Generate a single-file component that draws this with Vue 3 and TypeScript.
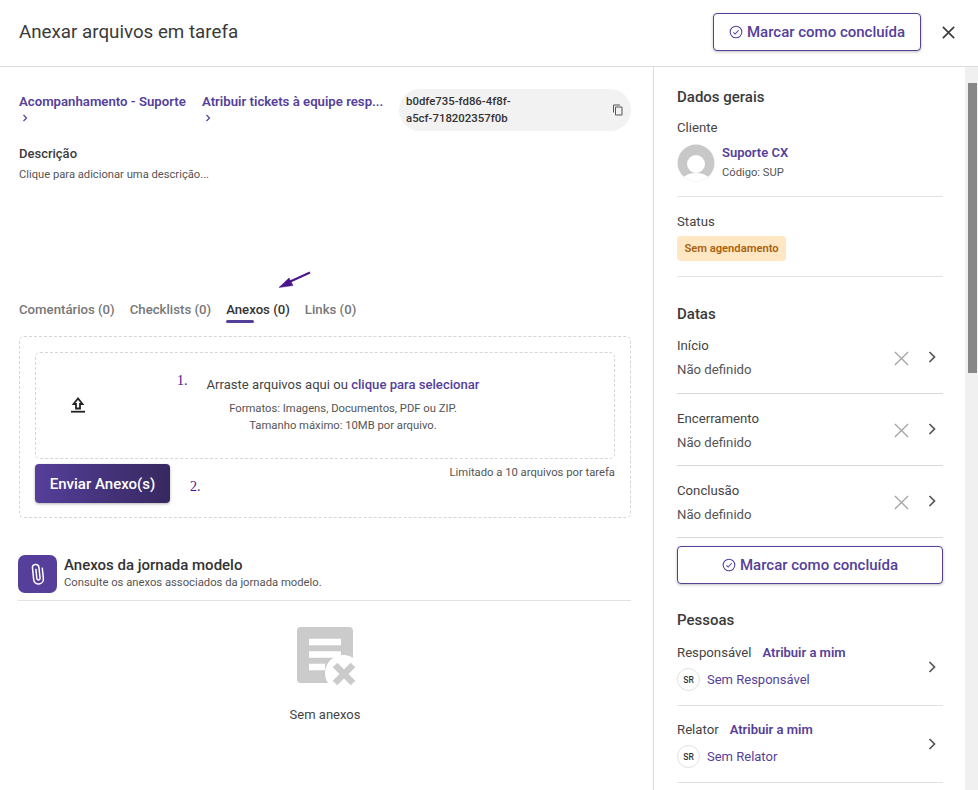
<template>
  <div class="page">
    <header class="top">
      <h1>Anexar arquivos em tarefa</h1>
      <div class="top-actions">
        <button class="outline top-btn">
          <svg class="check" viewBox="0 0 24 24"><circle cx="12" cy="12" r="10" /><path d="M7.5 12.5l3 3 6-6.5" /></svg>
          Marcar como concluída
        </button>
        <svg class="close" viewBox="0 0 16 16"><path d="M2 2l12 12M14 2L2 14" /></svg>
      </div>
    </header>

    <div class="body">
      <main class="left">
        <div class="crumbs">
          <div class="crumb first">
            <a>Acompanhamento - Suporte</a>
            <svg viewBox="0 0 8 8"><path d="M2.5 1l3 3-3 3" /></svg>
          </div>
          <div class="crumb second">
            <a>Atribuir tickets à equipe resp...</a>
            <svg viewBox="0 0 8 8"><path d="M2.5 1l3 3-3 3" /></svg>
          </div>
          <div class="uuid">
            <span>b0dfe735-fd86-4f8f-a5cf-718202357f0b</span>
            <svg viewBox="0 0 24 24"><path d="M16 1H4a2 2 0 0 0-2 2v14h2V3h12V1zm3 4H8a2 2 0 0 0-2 2v14a2 2 0 0 0 2 2h11a2 2 0 0 0 2-2V7a2 2 0 0 0-2-2zm0 16H8V7h11v14z" /></svg>
          </div>
        </div>

        <h3 class="desc-title">Descrição</h3>
        <p class="desc">Clique para adicionar uma descrição...</p>

        <nav class="tabs">
          <span v-for="t in tabs" :key="t" class="tab" :class="{ active: t === 'Anexos (0)' }">{{ t }}</span>
          <svg class="arrow" viewBox="0 0 34 20"><path d="M32 1.5L9 12" /><path class="head" d="M1 16.5L11 7l4 7.5z" /></svg>
        </nav>

        <section class="upload-box">
          <div class="drop">
            <svg class="up" viewBox="0 0 14 16"><path d="M7 1.5L2.5 7H5V11.5H9V7H11.5z" /><path d="M0 14.7h14" /></svg>
            <div class="drop-text">
              <p class="drag">Arraste arquivos aqui ou <b>clique para selecionar</b></p>
              <p>Formatos: Imagens, Documentos, PDF ou ZIP.</p>
              <p>Tamanho máximo: 10MB por arquivo.</p>
            </div>
            <span class="mark one">1.</span>
          </div>
          <div class="upload-foot">
            <button class="send">Enviar Anexo(s)</button>
            <span class="mark two">2.</span>
            <span class="limit">Limitado a 10 arquivos por tarefa</span>
          </div>
        </section>

        <div class="model-head">
          <div class="clip">
            <svg viewBox="0 0 24 24"><path d="M16.5 6.5v10.2a4.5 4.5 0 0 1-9 0V6a3 3 0 0 1 6 0v10a1.5 1.5 0 0 1-3 0V7" /></svg>
          </div>
          <div>
            <h2>Anexos da jornada modelo</h2>
            <p>Consulte os anexos associados da jornada modelo.</p>
          </div>
        </div>

        <div class="empty">
          <svg viewBox="0 0 60 60">
            <rect x="0" y="0" width="56" height="56" rx="4" fill="#cbcbcb" />
            <path d="M12 15h32M12 27.5h32M12 40h16" stroke="#fff" stroke-width="6.5" fill="none" />
            <circle cx="46" cy="46" r="18" fill="#fff" />
            <path d="M38 38l18 18M56 38L38 56" stroke="#cbcbcb" stroke-width="6.5" fill="none" />
          </svg>
          <span>Sem anexos</span>
        </div>
      </main>

      <aside class="side">
        <h4 class="first-head">Dados gerais</h4>
        <div class="field-label client-label">Cliente</div>
        <div class="client">
          <svg class="avatar" viewBox="0 0 38 38">
            <defs><clipPath id="av"><circle cx="19" cy="19" r="18.5" /></clipPath></defs>
            <circle cx="19" cy="19" r="18.5" fill="#c8c8c8" />
            <g clip-path="url(#av)" fill="#fff">
              <circle cx="19" cy="20" r="9" />
              <ellipse cx="19" cy="40" rx="16" ry="11" />
            </g>
          </svg>
          <div>
            <a class="client-name">Suporte CX</a>
            <div class="client-code">Código: SUP</div>
          </div>
        </div>
        <hr class="sep client-sep" />
        <div class="field-label">Status</div>
        <span class="badge">Sem agendamento</span>
        <hr class="sep status-sep" />

        <h4 class="dates-head">Datas</h4>
        <div v-for="d in dates" :key="d" class="date-row">
          <div>
            <div class="field-label">{{ d }}</div>
            <div class="date-value">Não definido</div>
          </div>
          <div class="row-icons">
            <svg class="x" viewBox="0 0 16 16"><path d="M1 1l14 14M15 1L1 15" /></svg>
            <svg class="chev" viewBox="0 0 10 14"><path d="M2.5 2l5 5-5 5" /></svg>
          </div>
        </div>

        <button class="outline side-btn">
          <svg class="check" viewBox="0 0 24 24"><circle cx="12" cy="12" r="10" /><path d="M7.5 12.5l3 3 6-6.5" /></svg>
          Marcar como concluída
        </button>

        <h4 class="people-head">Pessoas</h4>
        <div v-for="p in people" :key="p.role" class="person">
          <div>
            <div class="person-top">
              <span class="field-label">{{ p.role }}</span>
              <a>Atribuir a mim</a>
            </div>
            <div class="person-line">
              <span class="sr">SR</span>
              <a>{{ p.empty }}</a>
            </div>
          </div>
          <svg class="chev" viewBox="0 0 10 14"><path d="M2.5 2l5 5-5 5" /></svg>
        </div>
      </aside>

      <div class="scroll"><div class="thumb"></div></div>
    </div>
  </div>
</template>

<script setup lang="ts">
const tabs: string[] = ['Comentários (0)', 'Checklists (0)', 'Anexos (0)', 'Links (0)']
const dates: string[] = ['Início', 'Encerramento', 'Conclusão']
const people = [
  { role: 'Responsável', empty: 'Sem Responsável' },
  { role: 'Relator', empty: 'Sem Relator' },
]
</script>

<style>
html, body { margin: 0; background: #fff; overflow: hidden; }
</style>

<style scoped>
* { box-sizing: border-box; }
.page {
  width: 978px;
  height: 790px;
  overflow: hidden;
  font-family: Roboto, "Liberation Sans", sans-serif;
  color: #3c3c3c;
  background: #fff;
}
h1, h2, h3, h4, p { margin: 0; }
a { color: #553f9a; }

.top {
  height: 67px;
  display: flex;
  align-items: center;
  justify-content: space-between;
  padding: 0 22px 2px 19px;
  border-bottom: 1px solid #dcdcdc;
}
.top h1 { font-size: 18.75px; font-weight: 400; color: #3a3a3a; }
.top-actions { display: flex; align-items: center; gap: 20px; }
.close { width: 15px; height: 15px; stroke: #3c3c3c; stroke-width: 1.7; fill: none; }

.outline {
  display: flex;
  align-items: center;
  justify-content: center;
  gap: 4px;
  height: 38px;
  background: #fff;
  border: 1px solid #553f9a;
  border-radius: 4px;
  color: #553f9a;
  font: 500 15px Roboto, sans-serif;
  box-shadow: 0 1px 3px rgba(0, 0, 0, 0.25);
  padding: 0;
}
.top-btn { width: 208px; }
.check { width: 14px; height: 14px; fill: none; stroke: #553f9a; stroke-width: 1.8; }

.body { display: flex; height: 723px; }

.left {
  width: 654px;
  flex: none;
  padding: 22px 22px 0 19px;
  border-right: 1px solid #dcdcdc;
}
.crumbs { display: flex; align-items: flex-start; height: 42px; }
.crumb { font-size: 13.2px; font-weight: 600; line-height: 17px; padding-top: 4px; }
.crumb a { display: block; white-space: nowrap; }
.crumb svg { display: block; width: 8px; height: 8px; margin: 4px 0 0 2px; fill: none; stroke: #553f9a; stroke-width: 1.2; }
.first { width: 183px; }
.second { width: 197px; }
.uuid {
  width: 232px;
  height: 42px;
  flex: none;
  display: flex;
  align-items: center;
  justify-content: space-between;
  padding: 0 7px 0 7px;
  background: #f2f2f2;
  border-radius: 21px;
  font-size: 11.4px;
  font-weight: 500;
  line-height: 17px;
  color: #333;
}
.uuid span { width: 125px; }
.uuid svg { width: 12px; height: 12px; fill: #555; }

.desc-title { margin-top: 14px; font-size: 13px; font-weight: 500; line-height: 17px; }
.desc { margin-top: 6px; font-size: 11.2px; line-height: 14px; color: #555; }

.tabs { position: relative; display: flex; gap: 15px; margin-top: 118px; height: 36px; }
.tab { font-size: 13.2px; font-weight: 500; line-height: 17px; color: #777; padding-top: 1px; }
.tab.active { position: relative; color: #333; }
.tab.active::after {
  content: '';
  position: absolute;
  left: 0;
  top: 20px;
  width: 28px;
  height: 3px;
  border-radius: 2px;
  background: #553f9a;
}
.arrow {
  position: absolute;
  left: 259px;
  top: -29px;
  width: 34px;
  height: 20px;
  fill: none;
  stroke: #4a148c;
  stroke-width: 2;
}
.arrow .head { fill: #4a148c; stroke-width: 0.5; }

.upload-box {
  height: 182px;
  padding: 15px 15px 0;
  border: 1px dashed #d6d6d6;
  border-radius: 5px;
}
.drop {
  position: relative;
  height: 107px;
  display: flex;
  align-items: center;
  border: 1px dashed #d6d6d6;
  border-radius: 5px;
  padding-left: 35px;
}
.up { width: 14px; height: 16px; flex: none; margin-top: -1px; fill: none; stroke: #222; stroke-width: 1.8; }
.drop-text { width: 402px; margin: -2px 0 0 57px; text-align: center; font-size: 11.25px; line-height: 17px; color: #555; }
.drag { font-size: 13.1px; color: #444; margin-bottom: 6px; line-height: 18px; }
.drag b { color: #553f9a; font-weight: 500; }
.mark { position: absolute; font: 14px "Liberation Serif", serif; color: #4a148c; }
.one { left: 141px; top: 20px; }
.upload-foot { position: relative; display: flex; justify-content: space-between; margin-top: 5px; }
.send {
  width: 135px;
  height: 39px;
  border: 0;
  border-radius: 4px;
  color: #fff;
  font: 500 15px Roboto, sans-serif;
  background: linear-gradient(90deg, #553f9a, #37285f);
  box-shadow: 0 1px 3px rgba(0, 0, 0, 0.3);
  padding: 0;
}
.two { left: 155px; top: 15px; }
.limit { font-size: 11.25px; line-height: 17px; color: #555; }

.model-head {
  display: flex;
  gap: 7px;
  margin: 37px 0 0 -1px;
  height: 46px;
  border-bottom: 1px solid #e2e2e2;
}
.clip {
  width: 39px;
  height: 38px;
  flex: none;
  display: flex;
  align-items: center;
  justify-content: center;
  background: #553f9a;
  border-radius: 7px;
}
.clip svg { width: 26px; height: 26px; fill: none; stroke: #fff; stroke-width: 1.4; transform: rotate(-6deg); }
.model-head h2 { font-size: 15px; font-weight: 500; line-height: 20px; color: #333; }
.model-head p { font-size: 11.25px; line-height: 16px; color: #555; }

.empty { display: flex; flex-direction: column; align-items: center; padding-top: 26px; }
.empty svg { width: 60px; height: 60px; margin-left: 4px; }
.empty span { margin-top: 18px; font-size: 13px; line-height: 20px; color: #444; }

.side { width: 311px; flex: none; padding: 0 22px 0 23px; }
h4 { font-size: 15px; font-weight: 500; line-height: 20px; color: #3a3a3a; }
.first-head { margin-top: 20px; }
.field-label { font-size: 13.2px; line-height: 18px; color: #444; }
.client-label { margin-top: 12px; }
.client { display: flex; gap: 7px; margin-top: 7px; }
.avatar { width: 38px; height: 38px; flex: none; }
.client-name { display: block; font-size: 13px; font-weight: 600; line-height: 18px; }
.client-code { font-size: 11.2px; line-height: 18px; margin-top: 2px; color: #555; }
.sep { height: 1px; margin: 0; border: 0; background: #e2e2e2; }
.client-sep { margin: 14px 0 16px; }
.badge {
  display: inline-block;
  margin-top: 5px;
  width: 109px;
  height: 25px;
  line-height: 25px;
  text-align: center;
  background: #ffe7c4;
  color: #a8620c;
  font-size: 11.2px;
  font-weight: 600;
  border-radius: 4px;
}
.status-sep { margin-top: 15px; }
.dates-head { margin: 27px 0 -2px; }
.date-row {
  display: flex;
  justify-content: space-between;
  align-items: center;
  height: 72px;
  border-bottom: 1px solid #d8d8d8;
}
.date-row + .date-row { padding-top: 2px; }
.date-row + .date-row .row-icons { margin-top: -2px; }
.date-value { font-size: 13.2px; line-height: 18px; margin-top: 6px; color: #555; }
.row-icons { display: flex; align-items: center; gap: 18px; margin-right: 6px; }
.x { width: 15px; height: 15px; margin-top: 2px; stroke: #a4a4a4; stroke-width: 1.4; fill: none; }
.chev { width: 10px; height: 14px; stroke: #555; stroke-width: 1.7; fill: none; }
.row-icons .chev { margin-top: -2px; }
.side-btn { width: 100%; margin-top: 8px; }
.people-head { margin: 26px 0 -1px; }
.person {
  display: flex;
  align-items: center;
  justify-content: space-between;
  padding: 1px 6px 0 0;
  height: 77px;
  border-bottom: 1px solid #e2e2e2;
}
.person-top { display: flex; gap: 11px; line-height: 18px; }
.person-top a { font-size: 13px; font-weight: 600; }
.person-line { display: flex; align-items: center; gap: 7px; margin-top: 6px; font-size: 13px; }
.sr {
  width: 23px;
  height: 23px;
  display: flex;
  align-items: center;
  justify-content: center;
  border: 1px solid #e0e0e0;
  border-radius: 50%;
  font-size: 8.5px;
  font-weight: 500;
  color: #333;
}
.person .chev { margin-top: -2px; }

.scroll { width: 13px; flex: none; background: #f0f0f0; padding: 16px 1px 0 3px; }
.thumb { height: 290px; background: #878787; }
</style>
